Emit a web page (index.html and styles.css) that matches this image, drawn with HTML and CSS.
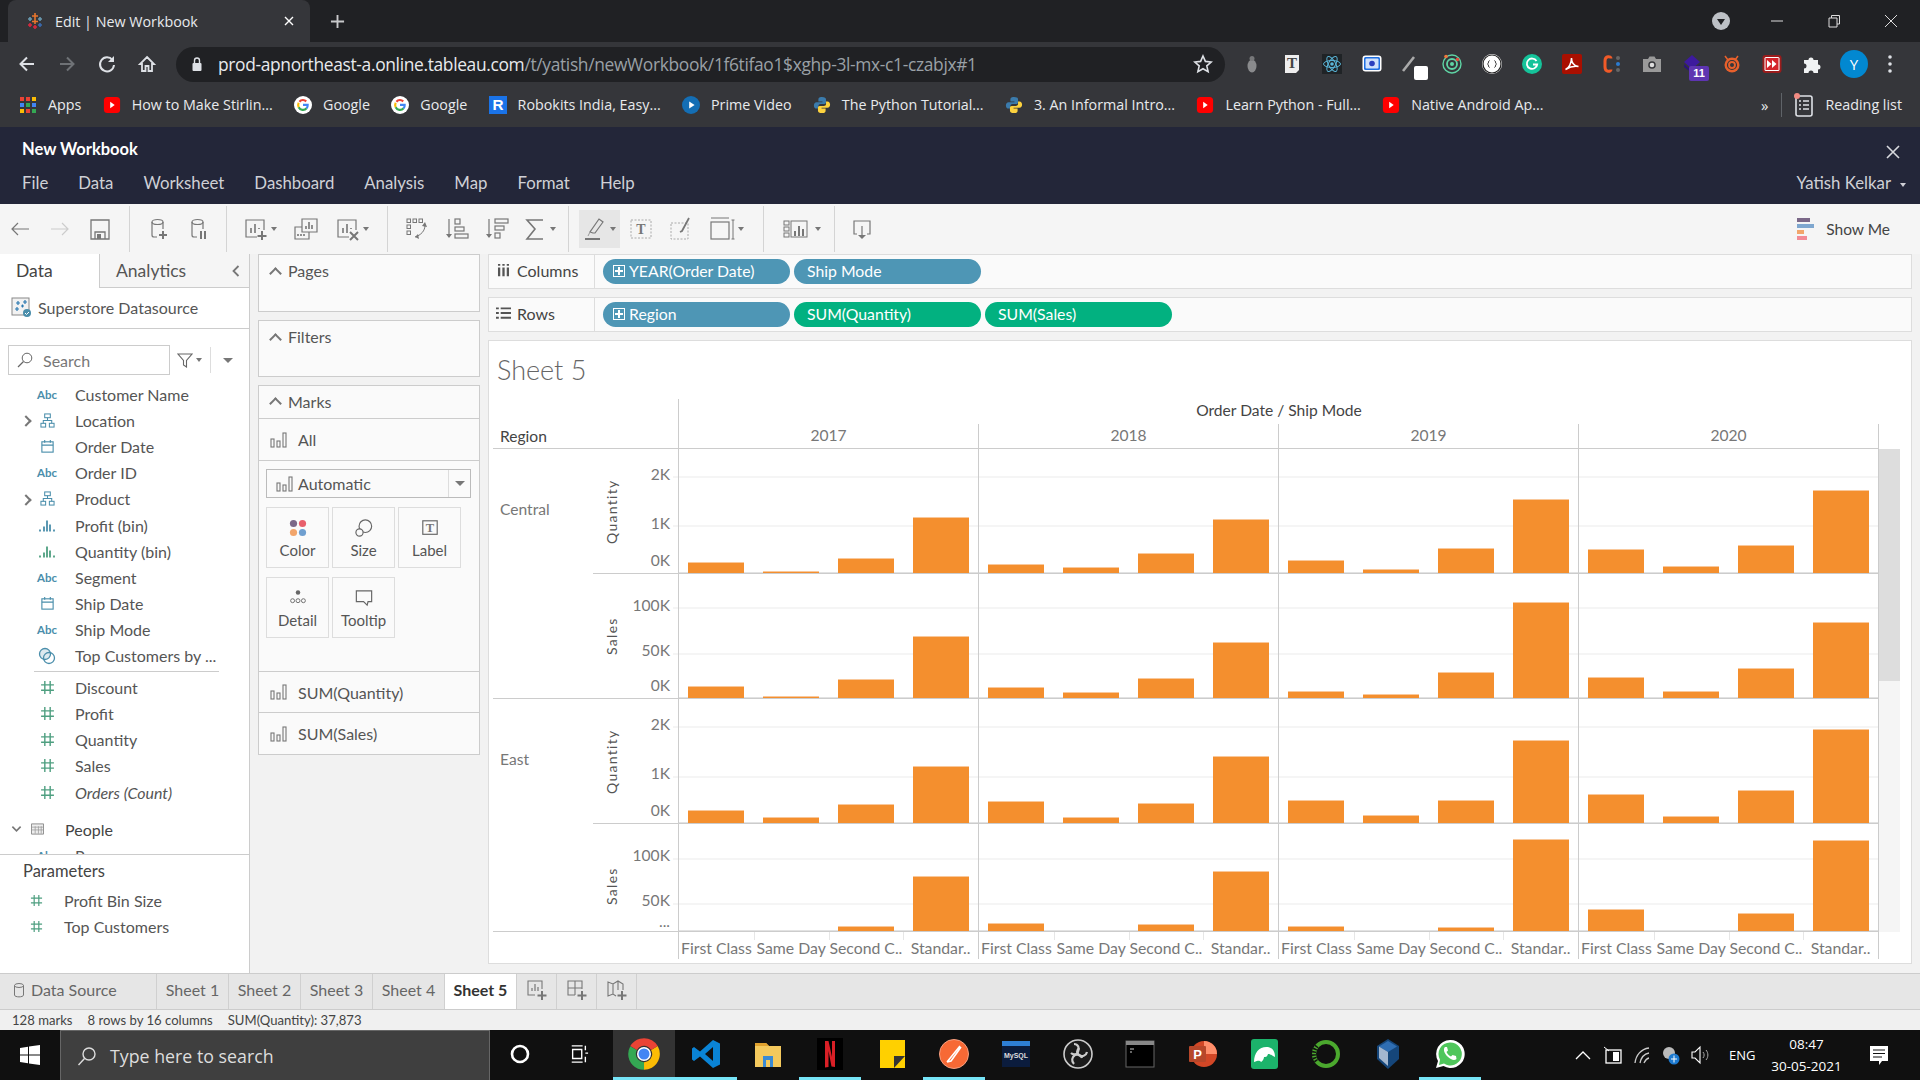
FILE: index.html
```html
<!DOCTYPE html>
<html lang="en">
<head>
    <meta charset="UTF-8">
    <title>Edit | New Workbook</title>
    <link rel="stylesheet" href="styles.css">
</head>
<body>

<svg class="defs" width="0" height="0">
    <symbol id="i-yt" viewBox="0 0 20 20"><rect x="1" y="1" width="18" height="18" rx="4" fill="#f00"/><path d="M8 6.500l5 3.500-5 3.500z" fill="#fff"/></symbol>
    <symbol id="i-g" viewBox="0 0 20 20"><circle cx="10" cy="10" r="10" fill="#fff"/><path d="M6 6.400A5.400 5.400 0 0 1 13.600 6" fill="none" stroke="#ea4335" stroke-width="2.400"/><path d="M5.200 12.400a5.400 5.400 0 0 1 0-4.800" fill="none" stroke="#fbbc05" stroke-width="2.400"/><path d="M14 13.700a5.400 5.400 0 0 1-8.800-1.300" fill="none" stroke="#34a853" stroke-width="2.400"/><path d="M10 9.900h5.200a5.400 5.400 0 0 1-1.200 3.800" fill="none" stroke="#4285f4" stroke-width="2.400"/></symbol>
    <symbol id="i-py" viewBox="0 0 20 20"><path d="M10 1C6.500 1 6 2.500 6 4v2h4.500v1H4C2 7 1 8.500 1 10.500S2 14 4 14h2v-2.500C6 10 7 9 8.500 9h4C14 9 14.500 8 14.500 6.500V4C14.500 2 13 1 10 1z" fill="#3b7bac"/><path d="M10 19c3.500 0 4-1.500 4-3v-2H9.500v-1H16c2 0 3-1.500 3-3.500S18 6 16 6h-1.500v2.500c0 1.500-1 2.500-2.500 2.500H7.500C6 11 5.500 12 5.500 13.500V16c0 2 1.500 3 4.500 3z" fill="#fdd23e"/></symbol>
    <symbol id="i-bars" viewBox="0 0 18 16"><g fill="none" stroke="#777" stroke-width="1.100"><rect x="1" y="7" width="3" height="8"/><rect x="7" y="9" width="3" height="6"/><rect x="13" y="1" width="3" height="14"/></g></symbol>
    <symbol id="i-hash" viewBox="0 0 14 14"><path d="M4.500 1v12M9.500 1v12M1 4.500h12M1 9.500h12" stroke="#4e9f80" stroke-width="1.300" fill="none"/></symbol>
    <symbol id="i-tree" viewBox="0 0 16 16"><g fill="none" stroke="#4a8eab" stroke-width="1.100"><rect x="5" y="1" width="6" height="4"/><rect x="1" y="11" width="5" height="4"/><rect x="10" y="11" width="5" height="4"/><path d="M8 5v3M3.500 11V8h9v3"/></g></symbol>
    <symbol id="i-cal" viewBox="0 0 16 16"><g fill="none" stroke="#4a8eab" stroke-width="1.200"><rect x="2" y="3" width="12" height="11"/><path d="M2 6.500h12M5 1v3M11 1v3"/></g></symbol>
    <symbol id="i-bin" viewBox="0 0 18 14"><path d="M2 11v2M6 8v5M9 2v11M12 6v7M16 11v2" stroke-width="1.800" fill="none" stroke="currentColor"/></symbol>
    <symbol id="i-cyl" viewBox="0 0 24 24"><path d="M6 5v13a2 2 0 0 0 2 2h3M17 5v7" fill="none" stroke="#777" stroke-width="1.200"/><ellipse cx="11.500" cy="5" rx="5.500" ry="2.500" fill="none" stroke="#777" stroke-width="1.200"/></symbol>
</svg>

<!-- browser chrome -->
<header class="browser">
    <div class="tabstrip">
        <div class="tab">
            <svg class="favicon" viewBox="0 0 18 18"><path d="M9 1v6M6 4h6" stroke="#e8762d" stroke-width="1.600"/><path d="M9 7v5M6 9.500h6" stroke="#e8762d" stroke-width="1.600"/><path d="M4 5v4M2 7h4" stroke="#6a9bb1" stroke-width="1.600"/><path d="M14 5v4M12 7h4" stroke="#6a9bb1" stroke-width="1.600"/><path d="M4 11v4M2 13h4" stroke="#d9283f" stroke-width="1.600"/><path d="M14 11v4M12 13h4" stroke="#3a6bb0" stroke-width="1.600"/><path d="M9 13v4M7 15h4" stroke="#d9283f" stroke-width="1.600"/></svg>
            <span class="tab-title">Edit | New Workbook</span>
            <svg class="tab-x" viewBox="0 0 10 10"><path d="M1 1l8 8M9 1l-8 8" stroke="#fff" stroke-width="1.400"/></svg>
        </div>
        <svg class="tab-new" viewBox="0 0 16 16"><path d="M8 1v14M1 8h14" stroke="#c8c9cb" stroke-width="2"/></svg>
        <div class="win-controls">
            <svg class="win-profile" viewBox="0 0 18 18"><circle cx="9" cy="9" r="9" fill="#bdc1c6"/><path d="M5 7h8l-4 6z" fill="#202124"/></svg>
            <svg class="win-btn" viewBox="0 0 14 14"><path d="M1 7h12" stroke="#ddd" stroke-width="1"/></svg>
            <svg class="win-btn" viewBox="0 0 14 14"><path d="M2 4h8v9H2zM4.500 4V1.500H12.500V10H10" fill="none" stroke="#ddd" stroke-width="1"/></svg>
            <svg class="win-btn" viewBox="0 0 14 14"><path d="M1 1l12 12M13 1L1 13" stroke="#ddd" stroke-width="1"/></svg>
        </div>
    </div>
    <div class="navbar">
        <svg class="nav-ico" viewBox="0 0 20 20"><path d="M17 10H4M10 3.500L3.500 10l6.500 6.500" fill="none" stroke="#dee1e6" stroke-width="2"/></svg>
        <svg class="nav-ico" viewBox="0 0 20 20"><path d="M3 10h13M10 3.500l6.500 6.500-6.500 6.500" fill="none" stroke="#6f7276" stroke-width="2"/></svg>
        <svg class="nav-ico" viewBox="0 0 20 20"><path d="M15.500 6A7 7 0 1 0 17 11" fill="none" stroke="#dee1e6" stroke-width="2"/><path d="M17 2v6h-6z" fill="#dee1e6"/></svg>
        <svg class="nav-ico" viewBox="0 0 20 20"><path d="M10 3l7 7h-2v7h-3.500v-5h-3v5H5v-7H3z" fill="none" stroke="#dee1e6" stroke-width="1.800"/></svg>
        <div class="omnibox">
            <svg class="lock" viewBox="0 0 12 16"><path d="M3.500 7V4.500a2.500 2.500 0 0 1 5 0V7" fill="none" stroke="#dee1e6" stroke-width="1.400"/><rect x="1.500" y="7" width="9" height="8" rx="1" fill="#dee1e6"/></svg>
            <span class="url"><b>prod-apnortheast-a.online.tableau.com</b>/t/yatish/newWorkbook/1f6tifao1$xghp-3l-mx-c1-czabjx#1</span>
            <svg class="star" viewBox="0 0 20 20"><path d="M10 2l2.400 5.400 5.800.6-4.400 3.900 1.300 5.800L10 14.700l-5.100 3 1.300-5.800L1.800 8l5.800-.6z" fill="none" stroke="#dee1e6" stroke-width="1.600"/></svg>
        </div>
        <div class="extensions">
            <svg viewBox="0 0 20 20"><ellipse cx="10" cy="12" rx="4.500" ry="6.500" fill="#8a8b8d"/><circle cx="10" cy="4.500" r="2.500" fill="#77787a"/></svg>
            <svg viewBox="0 0 20 20"><path d="M3 1h14v15l-3 3H3z" fill="#eee"/><text x="10" y="14" class="ext-t">T</text></svg>
            <svg viewBox="0 0 20 20"><rect width="20" height="20" fill="#1f2326"/><g fill="none" stroke="#5ab5d8" stroke-width="1"><ellipse cx="10" cy="10" rx="8.500" ry="3.500"/><ellipse cx="10" cy="10" rx="8.500" ry="3.500" transform="rotate(60 10 10)"/><ellipse cx="10" cy="10" rx="8.500" ry="3.500" transform="rotate(120 10 10)"/></g><circle cx="10" cy="10" r="1.800" fill="#5ab5d8"/></svg>
            <svg viewBox="0 0 20 20"><rect x=".500" y="1.500" width="19" height="16" rx="3" fill="#fff"/><rect x="2" y="3" width="16" height="13" rx="1.500" fill="#1e6ee0"/><rect x="3.500" y="4.500" width="13" height="10" rx="1" fill="#cfe0fb"/><circle cx="10" cy="9.500" r="2.800" fill="#2a3fbe"/></svg>
            <svg class="ext-over" viewBox="0 0 26 26"><path d="M1 17L12 3" stroke="#aaa" stroke-width="2.600"/><rect x="12" y="12" width="14" height="14" rx="2" fill="#fff"/></svg>
            <svg viewBox="0 0 20 20"><circle cx="10" cy="10" r="9" fill="none" stroke="#5fd5a5" stroke-width="1.400"/><circle cx="10" cy="10" r="5" fill="none" stroke="#5fd5a5" stroke-width="1.800"/><circle cx="10" cy="10" r="2" fill="#5fd5a5"/><circle cx="4" cy="2.500" r="1.800" fill="#f0783c"/><circle cx="15.500" cy="5.500" r="1.800" fill="#e0483c"/></svg>
            <svg viewBox="0 0 20 20"><circle cx="10" cy="10" r="10" fill="#fff"/><circle cx="10" cy="10" r="9" fill="none" stroke="#222" stroke-width="1.200"/><path d="M7.500 6.500C6 7 7 9.500 5.500 10c1.500.5.500 3 2 3.500M12.500 6.500c1.500.5.500 3 2 3.500-1.500.5-.500 3-2 3.500" fill="none" stroke="#222"/></svg>
            <svg viewBox="0 0 20 20"><circle cx="10" cy="10" r="10" fill="#15c39a"/><path d="M14.500 7a5.200 5.200 0 1 0 .7 3.500H11" fill="none" stroke="#fff" stroke-width="1.800"/></svg>
            <svg viewBox="0 0 20 20"><rect width="20" height="20" rx="2" fill="#a90f00"/><path d="M3.500 15.500C7 14 9.500 9 9.500 4c0 5 3 8 7 8.500-3.500-.5-9 .500-13 3z" fill="none" stroke="#fff" stroke-width="1.500"/></svg>
            <svg viewBox="0 0 20 20"><path d="M9 4.500C9 2 3 1.500 3 7v6c0 5.500 6 5 6 2.500" fill="none" stroke="#f05a28" stroke-width="3"/><circle cx="16" cy="4" r="2" fill="#666"/><circle cx="16" cy="10" r="2" fill="#2a7bd0"/><circle cx="16" cy="16" r="2" fill="#666"/></svg>
            <svg viewBox="0 0 20 20"><path d="M1 5h5l1.500-2.500h5L14 5h5v13H1z" fill="#9a9a9a"/><circle cx="10" cy="11" r="3.800" fill="#35363a"/><circle cx="10" cy="11" r="2.300" fill="#ddd"/></svg>
            <div class="ext-stack">
                <svg viewBox="0 0 20 20"><path d="M10 1l8 7-8 7-8-7z" fill="#3d1a9e"/><path d="M2 10l8 7 8-7v3l-8 6-8-6z" fill="#2b1477"/></svg>
                <span class="ext-badge">11</span>
            </div>
            <svg viewBox="0 0 20 20"><circle cx="10" cy="11" r="7.500" fill="#e8602c"/><circle cx="10" cy="11" r="4.500" fill="none" stroke="#35363a" stroke-width="1.200"/><circle cx="10" cy="11" r="2" fill="#35363a"/><path d="M3 2l3 4M16 2l-3 4" stroke="#e8602c" stroke-width="1.500"/></svg>
            <svg viewBox="0 0 20 20"><rect x=".500" y="1" width="19" height="18" rx="3" fill="#9b1c1c"/><rect x="2.500" y="3" width="15" height="14" rx="1.500" fill="#fff"/><rect x="3.500" y="4" width="13" height="12" fill="#d4232a"/><path d="M5 6l4.500 4L5 14zM10 6l4.500 4-4.500 4z" fill="#fff"/></svg>
            <svg viewBox="0 0 20 20"><path d="M2 6h4.500a2.500 2.500 0 1 1 5 0H16v4.500a2.500 2.500 0 1 1 0 5V19H11.500a2.500 2.500 0 1 0-5 0H2v-4.500a2.500 2.500 0 1 0 0-5z" fill="#f1f3f4"/></svg>
            <span class="avatar">Y</span>
            <svg class="ext-dots" viewBox="0 0 6 20"><circle cx="3" cy="3" r="1.800" fill="#dee1e6"/><circle cx="3" cy="10" r="1.800" fill="#dee1e6"/><circle cx="3" cy="17" r="1.800" fill="#dee1e6"/></svg>
        </div>
    </div>
    <div class="bookmarks">
        <span class="bm bm-apps">
            <svg class="bm-ico" viewBox="0 0 18 18"><g><rect x="1" y="1" width="4" height="4" fill="#e94335"/><rect x="7" y="1" width="4" height="4" fill="#e94335"/><rect x="13" y="1" width="4" height="4" fill="#fbbc05"/><rect x="1" y="7" width="4" height="4" fill="#4285f4"/><rect x="7" y="7" width="4" height="4" fill="#34a853"/><rect x="13" y="7" width="4" height="4" fill="#4285f4"/><rect x="1" y="13" width="4" height="4" fill="#fbbc05"/><rect x="7" y="13" width="4" height="4" fill="#e94335"/><rect x="13" y="13" width="4" height="4" fill="#34a853"/></g></svg>Apps</span>
        <span class="bm"><svg class="bm-ico"><use href="#i-yt"/></svg>How to Make Stirlin...</span>
        <span class="bm"><svg class="bm-ico"><use href="#i-g"/></svg>Google</span>
        <span class="bm"><svg class="bm-ico"><use href="#i-g"/></svg>Google</span>
        <span class="bm"><svg class="bm-ico" viewBox="0 0 20 20"><rect width="20" height="20" fill="#1a73e8"/><text x="10" y="16" class="bm-r">R</text></svg>Robokits India, Easy...</span>
        <span class="bm"><svg class="bm-ico" viewBox="0 0 20 20"><circle cx="10" cy="10" r="10" fill="#146eb4"/><path d="M8 6l6 4-6 4z" fill="#fff"/></svg>Prime Video</span>
        <span class="bm"><svg class="bm-ico"><use href="#i-py"/></svg>The Python Tutorial...</span>
        <span class="bm"><svg class="bm-ico"><use href="#i-py"/></svg>3. An Informal Intro...</span>
        <span class="bm"><svg class="bm-ico"><use href="#i-yt"/></svg>Learn Python - Full...</span>
        <span class="bm"><svg class="bm-ico"><use href="#i-yt"/></svg>Native Android Ap...</span>
        <span class="bm-more">»</span>
        <span class="bm bm-reading"><svg class="bm-ico" viewBox="0 0 20 24"><rect x="2" y="3" width="16" height="20" rx="2" fill="none" stroke="#dee1e6" stroke-width="1.600"/><path d="M9 8h6M9 12h6M9 16h6M5 8h2M5 12h2M5 16h2" stroke="#dee1e6" stroke-width="1.600"/><circle cx="3" cy="3" r="3" fill="#f28b82"/></svg>Reading list</span>
    </div>
</header>

<!-- tableau title + menu -->
<div class="app-head">
    <div class="app-title-row">
        <span class="app-title">New Workbook</span>
        <svg class="app-x" viewBox="0 0 14 14"><path d="M1 1l12 12M13 1L1 13" stroke="#d8d9de" stroke-width="1.600"/></svg>
    </div>
    <div class="menu-row">
        <nav class="menu">
            <span>File</span><span>Data</span><span>Worksheet</span><span>Dashboard</span><span>Analysis</span><span>Map</span><span>Format</span><span>Help</span>
        </nav>
        <span class="user">Yatish Kelkar<i class="caret caret-light"></i></span>
    </div>
</div>

<!-- toolbar -->
<div class="toolbar">
    <div class="tb-group tb-g1">
        <svg class="tb-btn" viewBox="0 0 24 24"><path d="M21 12H4M10 6l-6 6 6 6" fill="none" stroke="#777" stroke-width="1.200"/></svg>
        <svg class="tb-btn" viewBox="0 0 24 24"><path d="M3 12h17M14 6l6 6-6 6" fill="none" stroke="#ccc" stroke-width="1.200"/></svg>
        <svg class="tb-btn" viewBox="0 0 24 24"><path d="M3 3h18v19H3z" fill="none" stroke="#777" stroke-width="1.300"/><path d="M7 22v-7h10v7" fill="none" stroke="#777" stroke-width="1.300"/><rect x="9" y="17" width="4" height="5" fill="#777"/></svg>
    </div>
    <div class="tb-group tb-g2">
        <span class="tb-btn"><svg viewBox="0 0 24 24"><use href="#i-cyl"/><path d="M17 14v8M13 18h8" stroke="#777" stroke-width="2"/></svg></span>
        <span class="tb-btn"><svg viewBox="0 0 24 24"><use href="#i-cyl"/><path d="M15 14v8M19 14v8" stroke="#777" stroke-width="2"/></svg></span>
    </div>
    <div class="tb-group tb-g3">
        <span class="tb-btn tb-wide"><svg viewBox="0 0 24 24"><path d="M13 20H2V3h18v10" fill="none" stroke="#777" stroke-width="1.200"/><path d="M7 16v-5M11 16V7M15 12v-1" stroke="#777" stroke-width="1.600"/><path d="M18 14v9M13.500 19h9" stroke="#777" stroke-width="2"/></svg><i class="caret"></i></span>
        <span class="tb-btn tb-wide"><svg viewBox="0 0 24 24"><path d="M8 2h15v13H8z" fill="none" stroke="#777" stroke-width="1.200"/><path d="M12 12V9M15 12V5M18 12V8" stroke="#777" stroke-width="1.600"/><path d="M8 10H1v12h14v-7" fill="none" stroke="#777" stroke-width="1.200"/><path d="M4 19v-2M7 19v-2M10 19v-2" stroke="#777" stroke-width="1.600"/></svg></span>
        <span class="tb-btn tb-wide"><svg viewBox="0 0 24 24"><path d="M13 20H2V3h18v10" fill="none" stroke="#777" stroke-width="1.200"/><path d="M7 16v-5M11 16V7M15 12v-1" stroke="#777" stroke-width="1.600"/><path d="M14 15l8 8M22 15l-8 8" stroke="#777" stroke-width="2"/></svg><i class="caret"></i></span>
    </div>
    <div class="tb-group tb-g4">
        <svg class="tb-btn" viewBox="0 0 24 24"><g fill="none" stroke="#777"><rect x="2" y="2" width="3.500" height="3.500"/><rect x="8" y="2" width="3.500" height="3.500"/><rect x="14" y="2" width="3.500" height="3.500"/><rect x="2" y="8" width="3.500" height="3.500"/><rect x="2" y="14" width="3.500" height="3.500"/><path d="M20 8c0 6-4 10-10 12"/></g><path d="M17 9l3-4 2 5zM13 17l-3 3 4 2z" fill="#777"/></svg>
        <svg class="tb-btn" viewBox="0 0 24 24"><path d="M4 2v18" stroke="#777" stroke-width="1.200"/><path d="M1 17l3 4 3-4z" fill="#777"/><g fill="none" stroke="#777" stroke-width="1.200"><rect x="10" y="2" width="5" height="5"/><rect x="10" y="10" width="9" height="4"/><rect x="10" y="17" width="13" height="4"/></g></svg>
        <svg class="tb-btn" viewBox="0 0 24 24"><path d="M4 2v18" stroke="#777" stroke-width="1.200"/><path d="M1 17l3 4 3-4z" fill="#777"/><g fill="none" stroke="#777" stroke-width="1.200"><rect x="10" y="2" width="13" height="4"/><rect x="10" y="9" width="9" height="4"/><rect x="10" y="16" width="5" height="5"/></g></svg>
        <span class="tb-btn tb-sum"><svg viewBox="0 0 24 24"><path d="M20 3H4l8 9-8 10h16" fill="none" stroke="#777" stroke-width="1.600"/></svg><i class="caret"></i></span>
    </div>
    <div class="tb-group tb-g5">
        <span class="tb-btn tb-active"><svg viewBox="0 0 24 24"><path d="M10 16l-3-1 9-13 4 3-8 11z" fill="none" stroke="#777" stroke-width="1.200"/><path d="M7 15l-2 4" stroke="#999"/><path d="M2 22h15" stroke="#777" stroke-width="2"/></svg><i class="caret"></i></span>
        <svg class="tb-btn" viewBox="0 0 24 24"><rect x="2" y="3" width="20" height="18" fill="none" stroke="#aaa" stroke-dasharray="2 1.500"/><text x="12" y="17" class="tb-t">T</text></svg>
        <svg class="tb-btn" viewBox="0 0 24 24"><rect x="2" y="6" width="17" height="16" fill="none" stroke="#aaa" stroke-dasharray="2 1.500"/><path d="M20 1L13 14l-2 1" fill="none" stroke="#777" stroke-width="1.800"/></svg>
        <span class="tb-btn tb-fit"><svg viewBox="0 0 26 24"><path d="M2 1h18" stroke="#777"/><rect x="2" y="5" width="18" height="17" fill="none" stroke="#777" stroke-width="1.200"/><path d="M24 3v19M22.500 3h3M22.500 22h3" stroke="#777"/></svg><i class="caret"></i></span>
    </div>
    <div class="tb-group tb-g6">
        <span class="tb-btn tb-show"><svg viewBox="0 0 26 24"><g fill="none" stroke="#777"><rect x="2" y="4" width="5" height="4"/><rect x="2" y="10" width="5" height="4"/><rect x="2" y="16" width="5" height="4"/><rect x="9" y="4" width="16" height="16"/></g><path d="M13 19v-5M17 19v-10M21 19v-7" stroke="#777" stroke-width="2"/></svg><i class="caret"></i></span>
    </div>
    <div class="tb-group tb-g7">
        <svg class="tb-btn" viewBox="0 0 24 24"><path d="M7 17H4V4h16v13h-3" fill="none" stroke="#777" stroke-width="1.200"/><path d="M12 9v10" stroke="#777" stroke-width="1.200"/><path d="M8 18h8l-4 4z" fill="#777"/></svg>
    </div>
    <div class="show-me">
        <svg class="show-me-ico" viewBox="0 0 18 24"><rect x="1" y="1" width="13" height="4" fill="#7b6888"/><rect x="1" y="7" width="17" height="4" fill="#7fa7cf"/><rect x="1" y="13" width="7" height="4" fill="#f2a56b"/><rect x="1" y="19" width="10" height="4" fill="#f28b96"/></svg>
        Show Me
    </div>
</div>

<main class="workspace">
    <!-- data pane -->
    <aside class="data-pane">
        <div class="pane-tabs">
            <span class="pane-tab pane-tab-on">Data</span>
            <span class="pane-tab">Analytics<svg class="pane-collapse" viewBox="0 0 8 12"><path d="M6.500 1L1.500 6l5 5" fill="none" stroke="#777" stroke-width="1.800"/></svg></span>
        </div>
        <div class="ds-row">
            <svg class="ds-ico" viewBox="0 0 20 20"><rect x="1" y="1" width="17" height="17" fill="#f2f2f2" stroke="#888"/><path d="M5 6h4M7 4v4M12 5h4M14 3v4M4 12h4M6 10v4M10 9h3M11.500 7.500v3" stroke="#2b78b0" stroke-width="1.200"/><circle cx="16" cy="16" r="4" fill="#4a8eab"/><path d="M14 16l1.500 1.500L18 15" fill="none" stroke="#fff"/></svg>
            <span>Superstore Datasource</span>
        </div>
        <div class="search-row">
            <label class="search-box">
                <svg class="search-ico" viewBox="0 0 16 16"><circle cx="10" cy="6" r="4.800" fill="none" stroke="#666"/><path d="M6.500 9.500L1 15" stroke="#666" stroke-width="1.200"/></svg>
                <span>Search</span>
            </label>
            <svg class="search-filter" viewBox="0 0 16 16"><path d="M1 2h14L9.500 8.500V15l-3-2V8.500z" fill="none" stroke="#666" stroke-width="1.100"/></svg>
            <i class="caret caret-sm"></i>
            <span class="search-sep"></span>
            <i class="caret caret-lg"></i>
        </div>
        <div class="field-list">
            <div class="field"><b></b><span class="f-ico f-abc">Abc</span><span>Customer Name</span></div>
            <div class="field"><b class="f-more"></b><span class="f-ico"><svg><use href="#i-tree"/></svg></span><span>Location</span></div>
            <div class="field"><b></b><span class="f-ico"><svg><use href="#i-cal"/></svg></span><span>Order Date</span></div>
            <div class="field"><b></b><span class="f-ico f-abc">Abc</span><span>Order ID</span></div>
            <div class="field"><b class="f-more"></b><span class="f-ico"><svg><use href="#i-tree"/></svg></span><span>Product</span></div>
            <div class="field"><b></b><span class="f-ico f-bin-blue"><svg><use href="#i-bin"/></svg></span><span>Profit (bin)</span></div>
            <div class="field"><b></b><span class="f-ico f-bin-green"><svg><use href="#i-bin"/></svg></span><span>Quantity (bin)</span></div>
            <div class="field"><b></b><span class="f-ico f-abc">Abc</span><span>Segment</span></div>
            <div class="field"><b></b><span class="f-ico"><svg><use href="#i-cal"/></svg></span><span>Ship Date</span></div>
            <div class="field"><b></b><span class="f-ico f-abc">Abc</span><span>Ship Mode</span></div>
            <div class="field"><b></b><span class="f-ico f-set"><svg viewBox="0 0 18 18"><circle cx="7" cy="7" r="5.500" fill="#dce9ef" stroke="#4a8eab" stroke-width="1.300"/><circle cx="11" cy="11" r="5.500" fill="none" stroke="#4a8eab" stroke-width="1.300"/></svg></span><span>Top Customers by ...</span></div>
            <div class="field-sep"></div>
            <div class="field"><b></b><span class="f-ico"><svg><use href="#i-hash"/></svg></span><span>Discount</span></div>
            <div class="field"><b></b><span class="f-ico"><svg><use href="#i-hash"/></svg></span><span>Profit</span></div>
            <div class="field"><b></b><span class="f-ico"><svg><use href="#i-hash"/></svg></span><span>Quantity</span></div>
            <div class="field"><b></b><span class="f-ico"><svg><use href="#i-hash"/></svg></span><span>Sales</span></div>
            <div class="field field-calc"><b></b><span class="f-ico"><svg><use href="#i-hash"/></svg></span><em>Orders (Count)</em></div>
            <div class="table-row">
                <svg class="table-chev" viewBox="0 0 12 8"><path d="M1.500 1.500L6 6l4.500-4.500" fill="none" stroke="#777" stroke-width="1.800"/></svg>
                <svg class="table-ico" viewBox="0 0 14 12"><path d="M.500.500h13v11H.500z" fill="#eee" stroke="#888"/><path d="M1 4h12M1 7h12M4.500 3v8M8 3v8M11 3v8" stroke="#999" stroke-width=".800"/></svg>
                <span>People</span>
            </div>
            <div class="field field-sub"><span class="f-ico f-abc">Abc</span><span>Person</span></div>
        </div>
        <div class="params">
            <div class="params-title">Parameters</div>
            <div class="param"><svg><use href="#i-hash"/></svg><span>Profit Bin Size</span></div>
            <div class="param"><svg><use href="#i-hash"/></svg><span>Top Customers</span></div>
        </div>
    </aside>

    <!-- pages / filters / marks -->
    <section class="cards-col">
        <div class="card card-pages"><div class="card-head"><i class="chev-up"></i>Pages</div></div>
        <div class="card card-filters"><div class="card-head"><i class="chev-up"></i>Filters</div></div>
        <div class="card card-marks">
            <div class="card-head marks-head"><i class="chev-up"></i>Marks</div>
            <div class="marks-row marks-all"><svg><use href="#i-bars"/></svg>All</div>
            <div class="marks-body">
                <div class="mark-select">
                    <svg><use href="#i-bars"/></svg><span>Automatic</span>
                    <span class="mark-select-btn"><i class="caret caret-lg"></i></span>
                </div>
                <div class="mark-grid">
                    <div class="mark-btn"><svg viewBox="0 0 20 20"><circle cx="5" cy="5" r="4" fill="#7b6888"/><circle cx="15" cy="5" r="4" fill="#e8606c"/><circle cx="5" cy="15" r="4" fill="#f2a56b"/><circle cx="15" cy="15" r="4" fill="#6f9fd0"/></svg>Color</div>
                    <div class="mark-btn"><svg viewBox="0 0 20 20"><circle cx="11.500" cy="8" r="7" fill="none" stroke="#666" stroke-width="1.300"/><circle cx="5" cy="15" r="4" fill="#fafafa" stroke="#666" stroke-width="1.300"/></svg>Size</div>
                    <div class="mark-btn"><svg viewBox="0 0 20 20"><rect x="2" y="2" width="16" height="15" fill="none" stroke="#666" stroke-width="1.300"/><text x="10" y="14" class="tb-t">T</text></svg>Label</div>
                    <div class="mark-btn"><svg viewBox="0 0 20 20"><circle cx="10" cy="4" r="2.500" fill="#666"/><g fill="none" stroke="#666"><circle cx="4" cy="13" r="2.200"/><circle cx="10" cy="13" r="2.200"/><circle cx="16" cy="13" r="2.200"/></g></svg>Detail</div>
                    <div class="mark-btn"><svg viewBox="0 0 20 20"><path d="M1.500 2h17v12h-4l-1 4-4-4h-8z" fill="none" stroke="#666" stroke-width="1.300"/></svg>Tooltip</div>
                </div>
            </div>
            <div class="marks-row marks-sum"><svg><use href="#i-bars"/></svg>SUM(Quantity)</div>
            <div class="marks-row marks-sum"><svg><use href="#i-bars"/></svg>SUM(Sales)</div>
        </div>
    </section>

    <!-- shelves + view -->
    <section class="view-col">
        <div class="shelf">
            <div class="shelf-label"><svg viewBox="0 0 14 16"><path d="M2 5v10M7 5v10M12 5v10" stroke="#555" stroke-width="2.600"/><path d="M2 1v2M7 1v2M12 1v2" stroke="#555" stroke-width="2.600"/></svg>Columns</div>
            <div class="pills">
                <span class="pill pill-blue"><i class="pill-plus"></i>YEAR(Order Date)</span>
                <span class="pill pill-blue pill-plain">Ship Mode</span>
            </div>
        </div>
        <div class="shelf">
            <div class="shelf-label"><svg viewBox="0 0 16 14"><path d="M5 2h11M5 7h11M5 12h11M0 2h3M0 7h3M0 12h3" stroke="#555" stroke-width="2"/></svg>Rows</div>
            <div class="pills">
                <span class="pill pill-blue"><i class="pill-plus"></i>Region</span>
                <span class="pill pill-green pill-plain">SUM(Quantity)</span>
                <span class="pill pill-green pill-plain">SUM(Sales)</span>
            </div>
        </div>

        <div class="sheet">
            <h1 class="sheet-title">Sheet 5</h1>
            <div class="viz">
                <div class="viz-head">
                    <div class="vh-top"><span>Order Date / Ship Mode</span></div>
                    <div class="vh-years">
                        <div class="vh-region">Region</div>
                        <div class="vh-year">2017</div><div class="vh-year">2018</div><div class="vh-year">2019</div><div class="vh-year vh-last">2020</div>
                    </div>
                </div>
                <div class="viz-body">
                    <div class="viz-rows">
                        <div class="region">
                            <div class="region-name">Central</div>
                            <div class="measures">
                                <div class="measure">
                                    <div class="axis"><span class="axis-title">Quantity</span><span class="tick" style="top:15px">2K</span><span class="tick" style="top:64px">1K</span><span class="tick" style="top:101px">0K</span></div>
                                    <i class="gl" style="top:27px"></i><i class="gl" style="top:76px"></i>
                                    <div class="pane"><i class="bar" style="height:11px"></i><i class="bar" style="height:2px"></i><i class="bar" style="height:15px"></i><i class="bar" style="height:56px"></i></div>
                                    <div class="pane"><i class="bar" style="height:9px"></i><i class="bar" style="height:6px"></i><i class="bar" style="height:20px"></i><i class="bar" style="height:54px"></i></div>
                                    <div class="pane"><i class="bar" style="height:13px"></i><i class="bar" style="height:4px"></i><i class="bar" style="height:25px"></i><i class="bar" style="height:74px"></i></div>
                                    <div class="pane"><i class="bar" style="height:24px"></i><i class="bar" style="height:7px"></i><i class="bar" style="height:28px"></i><i class="bar" style="height:83px"></i></div>
                                </div>
                                <div class="measure measure-last">
                                    <div class="axis"><span class="axis-title">Sales</span><span class="tick" style="top:21px">100K</span><span class="tick" style="top:66px">50K</span><span class="tick" style="top:101px">0K</span></div>
                                    <i class="gl" style="top:33px"></i><i class="gl" style="top:79px"></i>
                                    <div class="pane"><i class="bar" style="height:12px"></i><i class="bar" style="height:2px"></i><i class="bar" style="height:19px"></i><i class="bar" style="height:62px"></i></div>
                                    <div class="pane"><i class="bar" style="height:11px"></i><i class="bar" style="height:6px"></i><i class="bar" style="height:20px"></i><i class="bar" style="height:56px"></i></div>
                                    <div class="pane"><i class="bar" style="height:7px"></i><i class="bar" style="height:4px"></i><i class="bar" style="height:26px"></i><i class="bar" style="height:96px"></i></div>
                                    <div class="pane"><i class="bar" style="height:21px"></i><i class="bar" style="height:7px"></i><i class="bar" style="height:30px"></i><i class="bar" style="height:76px"></i></div>
                                </div>
                            </div>
                        </div>
                        <div class="region">
                            <div class="region-name">East</div>
                            <div class="measures">
                                <div class="measure">
                                    <div class="axis"><span class="axis-title">Quantity</span><span class="tick" style="top:15px">2K</span><span class="tick" style="top:64px">1K</span><span class="tick" style="top:101px">0K</span></div>
                                    <i class="gl" style="top:27px"></i><i class="gl" style="top:77px"></i>
                                    <div class="pane"><i class="bar" style="height:13px"></i><i class="bar" style="height:6px"></i><i class="bar" style="height:19px"></i><i class="bar" style="height:57px"></i></div>
                                    <div class="pane"><i class="bar" style="height:22px"></i><i class="bar" style="height:6px"></i><i class="bar" style="height:20px"></i><i class="bar" style="height:67px"></i></div>
                                    <div class="pane"><i class="bar" style="height:23px"></i><i class="bar" style="height:8px"></i><i class="bar" style="height:23px"></i><i class="bar" style="height:83px"></i></div>
                                    <div class="pane"><i class="bar" style="height:29px"></i><i class="bar" style="height:7px"></i><i class="bar" style="height:33px"></i><i class="bar" style="height:94px"></i></div>
                                </div>
                                <div class="measure measure-last measure-cut">
                                    <div class="axis"><span class="axis-title">Sales</span><span class="tick" style="top:21px">100K</span><span class="tick" style="top:66px">50K</span><span class="tick" style="top:87px">...</span></div>
                                    <i class="gl" style="top:34px"></i><i class="gl" style="top:79px"></i>
                                    <div class="pane"><i class="bar bar-none"></i><i class="bar bar-none"></i><i class="bar" style="height:5px"></i><i class="bar" style="height:55px"></i></div>
                                    <div class="pane"><i class="bar" style="height:8px"></i><i class="bar bar-none"></i><i class="bar" style="height:7px"></i><i class="bar" style="height:60px"></i></div>
                                    <div class="pane"><i class="bar" style="height:5px"></i><i class="bar bar-none"></i><i class="bar" style="height:4px"></i><i class="bar" style="height:92px"></i></div>
                                    <div class="pane"><i class="bar" style="height:22px"></i><i class="bar bar-none"></i><i class="bar" style="height:18px"></i><i class="bar" style="height:91px"></i></div>
                                </div>
                            </div>
                        </div>
                    </div>
                    <div class="viz-scroll"><div class="viz-thumb"></div></div>
                </div>
                <div class="viz-foot">
                    <div class="vf-year"><span>First Class</span><span>Same Day</span><span>Second C..</span><span>Standar..</span></div>
                    <div class="vf-year"><span>First Class</span><span>Same Day</span><span>Second C..</span><span>Standar..</span></div>
                    <div class="vf-year"><span>First Class</span><span>Same Day</span><span>Second C..</span><span>Standar..</span></div>
                    <div class="vf-year vf-last"><span>First Class</span><span>Same Day</span><span>Second C..</span><span>Standar..</span></div>
                </div>
            </div>
        </div>
    </section>
</main>

<!-- sheet tabs -->
<div class="sheet-tabs">
    <span class="st st-ds"><svg viewBox="0 0 12 16"><path d="M1.500 3.500v9.500c0 2.500 9 2.500 9 0V3.500" fill="none" stroke="#777"/><ellipse cx="6" cy="3.500" rx="4.500" ry="2" fill="none" stroke="#777"/></svg>Data Source</span>
    <span class="st">Sheet 1</span>
    <span class="st">Sheet 2</span>
    <span class="st">Sheet 3</span>
    <span class="st">Sheet 4</span>
    <span class="st st-on">Sheet 5</span>
    <span class="st st-new"><svg viewBox="0 0 22 22"><path d="M9 16H2V2h14v8" fill="none" stroke="#777" stroke-width="1.100"/><path d="M6 12V9M9 12V5M12 12V8" stroke="#777" stroke-width="1.200"/><path d="M16 12v9M11.500 16.500h9" stroke="#777" stroke-width="2"/></svg></span>
    <span class="st st-new"><svg viewBox="0 0 22 22"><path d="M9 16H2V2h14v8M2 9h14M9 2v14" fill="none" stroke="#777" stroke-width="1.100"/><path d="M16 12v9M11.500 16.500h9" stroke="#777" stroke-width="2"/></svg></span>
    <span class="st st-new"><svg viewBox="0 0 22 22"><path d="M10 17l-3-2-5 2V3l5 2 5-3 5 3v6M7 5v10M12 2v9" fill="none" stroke="#777" stroke-width="1.100"/><path d="M16 12v9M11.500 16.500h9" stroke="#777" stroke-width="2"/></svg></span>
</div>

<div class="status-bar">
    <span>128 marks</span><span>8 rows by 16 columns</span><span>SUM(Quantity): 37,873</span>
</div>

<!-- windows taskbar -->
<footer class="taskbar">
    <svg class="win-logo" viewBox="0 0 20 20"><path d="M0 3l8-1.200V9.500H0zM9 1.600L20 0v9.500H9zM0 10.500h8v7.700L0 17zM9 10.500h11V20L9 18.400z" fill="#fff"/></svg>
    <div class="win-search">
        <svg viewBox="0 0 20 20"><circle cx="12" cy="8" r="6" fill="none" stroke="#ddd" stroke-width="1.400"/><path d="M7.500 12.500L1.500 19" stroke="#ddd" stroke-width="1.400"/></svg>
        <span>Type here to search</span>
    </div>
    <span class="tb-app tb-cortana"><svg viewBox="0 0 20 20"><circle cx="10" cy="10" r="8" fill="none" stroke="#fff" stroke-width="2.600"/></svg></span>
    <span class="tb-app tb-taskview"><svg viewBox="0 0 22 22"><path d="M3 2h12M4 6h10v10H4zM3 20h12M18 2v5M18 10h3M18 14v6" fill="none" stroke="#fff" stroke-width="1.500"/></svg></span>
    <span class="tb-app tb-running tb-focus"><svg viewBox="0 0 32 32"><circle cx="16" cy="16" r="12" fill="none" stroke="#34a853" stroke-width="7.600" pathLength="3" stroke-dasharray="1 2" transform="rotate(90 16 16)"/><circle cx="16" cy="16" r="12" fill="none" stroke="#fbbc05" stroke-width="7.600" pathLength="3" stroke-dasharray="1 2" transform="rotate(-30 16 16)"/><circle cx="16" cy="16" r="12" fill="none" stroke="#ea4335" stroke-width="7.600" pathLength="3" stroke-dasharray="1 2" transform="rotate(-150 16 16)"/><circle cx="16" cy="16" r="7" fill="#fff"/><circle cx="16" cy="16" r="5.500" fill="#4285f4"/></svg></span>
    <span class="tb-app tb-running"><svg viewBox="0 0 32 32"><path d="M23 2l7 3.500v21L23 30 10 18.500 4 23l-2-1.500V10.500L4 9l6 4.500z" fill="#0a84d6"/><path d="M23 9l-8 7 8 7z" fill="#101010"/></svg></span>
    <span class="tb-app"><svg viewBox="0 0 32 32"><path d="M3 5h11l3 3h12v21H3z" fill="#f4c95d"/><path d="M3 5h11l3 3h-14z" fill="#e0a12e"/><path d="M11 29V18h10v11h-3v-7h-4v7z" fill="#3a8ad4"/></svg></span>
    <span class="tb-app tb-running"><svg viewBox="0 0 32 32"><rect x="3" width="26" height="32" fill="#000"/><path d="M11 3h3.500l3.500 16V3h3v26l-3.500-.500L14.500 13v16L11 29.500z" fill="#d81f26"/></svg></span>
    <span class="tb-app"><svg viewBox="0 0 32 32"><rect x="4" y="2" width="25" height="28" fill="#ffd000"/><path d="M18 30V18h11z" fill="#333"/></svg></span>
    <span class="tb-app tb-running"><svg viewBox="0 0 32 32"><circle cx="16" cy="16" r="14.500" fill="#f76935" stroke="#f5a081"/><path d="M9 24L22 8M9 24l4-1 10-14" stroke="#fff" stroke-width="1.600" fill="none"/></svg></span>
    <span class="tb-app"><svg viewBox="0 0 32 32"><rect x="2" y="3" width="28" height="26" fill="#0b1c3d"/><rect x="2" y="3" width="28" height="5" fill="#2e7fd6"/><text x="16" y="20" class="tb-mysql">MySQL</text></svg></span>
    <span class="tb-app"><svg viewBox="0 0 32 32"><circle cx="16" cy="16" r="14" fill="#1b1b1b" stroke="#ccc" stroke-width="1.600"/><g fill="none" stroke="#ccc" stroke-width="2.200"><path d="M12 6c4 0 6 4 4 8-1 3-5 3-7 1"/><path d="M25 14c-1 4-5 5-8 3-3-2-2-5 0-7"/><path d="M12 26c-3-3-2-7 1-9 3-1 6 0 7 3"/></g></svg></span>
    <span class="tb-app"><svg viewBox="0 0 32 32"><rect x="2" y="3" width="28" height="26" fill="#000" stroke="#666"/><rect x="2" y="3" width="28" height="4" fill="#888"/><path d="M6 11h4M6 14h2" stroke="#ccc" stroke-width="1.200"/></svg></span>
    <span class="tb-app"><svg viewBox="0 0 32 32"><circle cx="18" cy="16" r="13" fill="#d24726"/><path d="M18 3a13 13 0 0 1 13 13H18z" fill="#ff8f6b"/><rect x="3" y="8" width="17" height="16" rx="1" fill="#b7472a"/><text x="11.500" y="21" class="tb-p">P</text></svg></span>
    <span class="tb-app"><svg viewBox="0 0 32 32"><rect x="3" y="1" width="27" height="30" rx="3" fill="#1cb36b"/><path d="M6 24c0-10 6-16 14-15 5 1 7 5 7 10-3-1-4-3-7-3-1 3-2 3-4 3 0 3-3 5-3 5-2-2-3-1-7 0z" fill="#fff"/></svg></span>
    <span class="tb-app"><svg viewBox="0 0 32 32"><circle cx="16" cy="16" r="12" fill="none" stroke="#4ba82e" stroke-width="4"/><path d="M7 8a12 12 0 0 0 0 16" fill="none" stroke="#101010" stroke-width="4" stroke-dasharray="1.500 1.500"/></svg></span>
    <span class="tb-app"><svg viewBox="0 0 32 32"><path d="M16 1l11 7v13l-11 10L5 21V8z" fill="#15467a"/><path d="M16 3l9 5.500-9 5.500-9-5.500z" fill="#2f6eb3"/><path d="M16 14l-9-5.500V20l9 8z" fill="#a4b7cf"/></svg></span>
    <span class="tb-app tb-running"><svg viewBox="0 0 32 32"><path d="M16 2a14 14 0 0 0-12 21L2 30l7.500-2A14 14 0 1 0 16 2z" fill="#fff"/><path d="M16 4.500a11.500 11.500 0 0 0-10 17.200L5 27l5-1.400A11.500 11.500 0 1 0 16 4.500z" fill="#4fc65b"/><path d="M11 9c-2 2-1 6 2.500 9.500s7 4.500 9 2.500l-.5-3-3.500-1-1.500 1.500c-2-1-3.500-2.500-4.500-4.500l1.500-1.500-1-3.500z" fill="#fff"/></svg></span>
    <div class="tray">
        <svg class="tray-chev" viewBox="0 0 16 10"><path d="M1 9l7-7 7 7" fill="none" stroke="#fff" stroke-width="1.300"/></svg>
        <svg viewBox="0 0 20 20"><rect x="3" y="5" width="15" height="13" fill="none" stroke="#fff" stroke-width="1.300"/><rect x="10" y="7" width="6" height="9" fill="#fff"/><path d="M1 2l5 4" stroke="#fff"/></svg>
        <svg viewBox="0 0 20 20"><g fill="none" stroke="#ccc" stroke-width="1.300"><path d="M17 3C9 4 4 10 3 18"/><path d="M17 8c-5 1-8 5-9 10"/><path d="M17 13c-3 .5-4 3-5 5"/></g></svg>
        <svg viewBox="0 0 20 20"><circle cx="8" cy="8" r="6" fill="#bbb"/><circle cx="13" cy="14" r="5.500" fill="#1d7ad0"/><path d="M13 10.500v7M10 14h6" stroke="#fff"/></svg>
        <svg viewBox="0 0 20 20"><path d="M2 7h3l5-5v16l-5-5H2z" fill="none" stroke="#fff" stroke-width="1.100"/><path d="M13 7c1.500 2 1.500 4 0 6M16 5c2.500 3 2.500 7 0 10" fill="none" stroke="#aaa"/></svg>
        <span class="tray-lang">ENG</span>
        <div class="tray-clock"><span>08:47</span><span>30-05-2021</span></div>
        <svg class="tray-notif" viewBox="0 0 22 22"><path d="M2 2h18v15h-6l-3 4v-4H2z" fill="#fff"/><path d="M5 6h12M5 9.500h12M5 13h9" stroke="#111" stroke-width="1.200"/></svg>
    </div>
</footer>

</body>
</html>
```

FILE: styles.css
```css
* {
    box-sizing: border-box;
}

html, body {
    margin: 0;
    width: 1920px;
    height: 1080px;
    overflow: hidden;
    background-color: #f2f2f2;
}

body {
    font-family: "Lato", "Open Sans", sans-serif;
    color: #555;
}

i {
    font-style: normal;
}

svg text {
    font-family: "Liberation Serif", serif;
    text-anchor: middle;
}

.defs {
    position: absolute;
}

/* browser chrome */
.browser {
    font-family: "Open Sans", sans-serif;
    font-size: 14.300px;
    color: #e8eaed;
}

.tabstrip {
    display: flex;
    align-items: flex-end;
    height: 42px;
    padding-left: 8px;
    background-color: #202124;
}

.tab {
    display: flex;
    align-items: center;
    width: 302px;
    height: 42px;
    padding: 0 16px 0 18px;
    background-color: #35363a;
    border-radius: 8px 8px 0 0;
}

.favicon {
    width: 18px;
    height: 18px;
}

.tab-title {
    margin-left: 11px;
    flex: 1;
}

.tab-x {
    width: 10px;
    height: 10px;
}

.tab-new {
    width: 15px;
    height: 15px;
    margin: 0 0 13px 20px;
}

.win-controls {
    display: flex;
    align-items: center;
    height: 42px;
    margin-left: auto;
}

.win-profile {
    width: 18px;
    height: 18px;
    margin-right: 40px;
}

.win-btn {
    width: 14px;
    height: 14px;
    margin-right: 43px;
}

.win-btn:last-child {
    margin-right: 22px;
}

.navbar {
    display: flex;
    align-items: center;
    height: 42px;
    padding: 2px 0 0 17px;
    background-color: #35363a;
}

.nav-ico {
    width: 20px;
    height: 20px;
    margin-right: 20px;
}

.omnibox {
    display: flex;
    align-items: center;
    width: 1049px;
    height: 35px;
    margin-left: -1px;
    padding: 0 12px 0 15px;
    background-color: #202124;
    border-radius: 18px;
    color: #9aa0a6;
    font-size: 17.400px;
}

.lock {
    width: 12px;
    height: 16px;
    margin-right: 15px;
}

.url {
    flex: 1;
    white-space: nowrap;
    letter-spacing: -0.340px;
}

.url b {
    font-weight: 400;
    color: #e8eaed;
}

.star {
    width: 20px;
    height: 20px;
}

.extensions {
    display: flex;
    align-items: center;
    padding-left: 17px;
}

.extensions > svg,
.ext-stack {
    flex: none;
    width: 20px;
    height: 20px;
    margin-right: 20px;
}

.extensions > .ext-over {
    width: 26px;
    height: 26px;
    margin: 6px 14px 0 0;
}

.extensions > .ext-dots {
    width: 6px;
    margin: 0 0 0 3px;
}

.ext-t {
    font-size: 15px;
    font-weight: 700;
    fill: #444;
}

.ext-stack {
    position: relative;
}

.ext-stack svg {
    width: 20px;
    height: 20px;
}

.ext-badge {
    position: absolute;
    top: 12px;
    left: 7px;
    width: 20px;
    height: 15px;
    background-color: #5e35b1;
    border-radius: 2px;
    color: #fff;
    font: 700 11px/15px "Liberation Sans", sans-serif;
    text-align: center;
}

.avatar {
    width: 28px;
    height: 28px;
    margin: 0 16px 0 -2px;
    background-color: #0288d1;
    border-radius: 50%;
    color: #fff;
    font-size: 15px;
    line-height: 28px;
    text-align: center;
}

.bookmarks {
    display: flex;
    align-items: center;
    height: 43px;
    padding: 0 0 2px 19px;
    background-color: #35363a;
    white-space: nowrap;
}

.bm {
    display: flex;
    align-items: center;
    margin-right: 21.300px;
}

.bm-ico {
    width: 18px;
    height: 18px;
    margin-right: 11px;
}

.bm-r {
    font: 700 17px "Liberation Sans", sans-serif;
    fill: #fff;
}

.bm-more {
    margin-left: auto;
    padding-right: 13px;
    border-right: 1px solid #5f6368;
    font-size: 15px;
    line-height: 24px;
}

.bm-reading {
    margin: 0 18px 0 12px;
}

.bm-reading .bm-ico {
    width: 20px;
    height: 24px;
}

/* tableau header */
.app-head {
    height: 77px;
    padding: 9px 0 0 22px;
    background-color: #232639;
}

.app-title-row {
    display: flex;
    align-items: center;
    height: 26px;
    color: #fff;
    font-size: 16.500px;
    font-weight: 700;
}

.app-x {
    width: 14px;
    height: 14px;
    margin: 5px 20px 0 auto;
}

.menu-row {
    display: flex;
    align-items: center;
    height: 36px;
    margin-top: 2px;
    color: #cfd0d6;
    font-size: 16.800px;
}

.menu {
    display: flex;
    gap: 30px;
}

.user {
    margin-left: auto;
    padding-right: 14px;
}

.caret {
    display: inline-block;
    width: 0;
    height: 0;
    border: 3.500px solid transparent;
    border-top: 4px solid #777;
    border-bottom: 0;
}

.caret-light {
    margin-left: 9px;
    vertical-align: 2px;
    border-top-color: #cfd0d6;
}

.caret-sm {
    flex: none;
}

.caret-lg {
    border-width: 5px 5px 0;
    flex: none;
}

/* toolbar */
.toolbar {
    display: flex;
    align-items: center;
    height: 50px;
    background-color: #f5f5f5;
}

.tb-group {
    display: flex;
    align-items: center;
    height: 46px;
    border-right: 1px solid #d4d4d4;
}

.tb-g1 { width: 130px; padding-left: 0; }
.tb-g2 { width: 97px; padding-left: 8px; }
.tb-g3 { width: 161px; padding-left: 10px; }
.tb-g4 { width: 181px; padding-left: 9px; }
.tb-g5 { width: 195px; padding-left: 10px; }
.tb-g6 { width: 71px; }
.tb-g7 { width: 60px; padding-left: 7px; border-right: 0; }

svg.tb-btn {
    width: 40px;
    height: 24px;
    flex: none;
}

span.tb-btn {
    display: flex;
    align-items: center;
    justify-content: center;
    gap: 3px;
    width: 40px;
    height: 38px;
    flex: none;
}

span.tb-btn svg {
    width: 24px;
    height: 24px;
    flex: none;
}

span.tb-wide {
    width: 46px;
}

span.tb-sum {
    padding-left: 4px;
}

span.tb-active {
    width: 41px;
    margin-right: 1px;
    background-color: #e6e6e6;
}

span.tb-fit {
    width: 50px;
}

span.tb-fit svg {
    width: 26px;
}

span.tb-show {
    width: 71px;
    padding-left: 4px;
    gap: 7px;
}

span.tb-show svg {
    width: 26px;
}

.tb-t {
    font-size: 14px;
    font-weight: 700;
    fill: #777;
}

.show-me {
    display: flex;
    align-items: center;
    margin-left: auto;
    padding-right: 30px;
    color: #444;
    font-size: 15.500px;
}

.show-me-ico {
    width: 18px;
    height: 24px;
    margin-right: 12px;
}

/* workspace */
.workspace {
    display: flex;
    height: 719px;
}

.data-pane {
    display: flex;
    flex-direction: column;
    flex: none;
    width: 250px;
    background-color: #fff;
    border-right: 1px solid #ccc;
    font-size: 16px;
}

.pane-tabs {
    display: flex;
    flex: none;
    height: 34px;
    font-size: 17.500px;
    line-height: 34px;
}

.pane-tab {
    position: relative;
    flex: 1;
    padding-left: 16px;
    background-color: #f5f5f5;
    border-bottom: 1px solid #ccc;
    border-left: 1px solid #ccc;
}

.pane-tab-on {
    flex: none;
    width: 99px;
    background-color: #fff;
    border: 0;
    color: #444;
}

.pane-collapse {
    position: absolute;
    top: 11px;
    right: 9px;
    width: 8px;
    height: 12px;
}

.ds-row {
    display: flex;
    align-items: center;
    flex: none;
    height: 41px;
    padding: 0 0 2px 11px;
    border-bottom: 1px solid #ccc;
}

.ds-ico {
    width: 20px;
    height: 20px;
    margin-right: 7px;
}

.search-row {
    display: flex;
    align-items: center;
    flex: none;
    height: 52px;
    padding: 16px 0 6px 8px;
}

.search-box {
    display: flex;
    align-items: center;
    width: 162px;
    height: 30px;
    padding-left: 8px;
    border: 1px solid #ccc;
    color: #777;
}

.search-ico {
    width: 16px;
    height: 16px;
    margin-right: 10px;
}

.search-filter {
    width: 16px;
    height: 16px;
    margin: 0 3px 0 7px;
}

.search-sep {
    height: 26px;
    margin: 0 12px 0 8px;
    border-left: 1px solid #ddd;
}

.field-list {
    flex: 1;
    overflow: hidden;
}

.field {
    display: flex;
    align-items: center;
    height: 26.200px;
    padding-left: 21px;
}

.field b {
    flex: none;
    width: 12px;
    height: 12px;
}

.f-more {
    background-color: transparent;
    position: relative;
}

.f-more::after {
    content: "";
    position: absolute;
    top: 3px;
    left: 1px;
    width: 6px;
    height: 6px;
    border-top: 2px solid #777;
    border-right: 2px solid #777;
    transform: rotate(45deg);
}

.f-ico {
    display: flex;
    align-items: center;
    justify-content: center;
    flex: none;
    width: 28px;
    margin-right: 14px;
}

.f-ico svg {
    width: 15px;
    height: 15px;
}

.f-abc {
    color: #4a8eab;
    font-size: 11.500px;
    font-weight: 700;
}

.f-bin-blue {
    color: #4a8eab;
}

.f-bin-green {
    color: #4e9f80;
}

.f-bin-blue svg,
.f-bin-green svg {
    width: 18px;
}

.f-set svg {
    width: 18px;
    height: 18px;
}

.field-sep {
    height: 1px;
    margin: 2px 30px 2px 34px;
    background-color: #ccc;
}

.field-calc {
    margin-top: 1px;
}

.table-row {
    display: flex;
    align-items: center;
    height: 26px;
    margin-top: 10px;
    padding-left: 11px;
    color: #444;
}

.table-chev {
    width: 11px;
    height: 8px;
    margin-right: 9px;
}

.table-ico {
    width: 13px;
    height: 12px;
    margin-right: 21px;
}

.field-sub {
    padding-left: 33px;
}

.params {
    flex: none;
    height: 119px;
    border-top: 1px solid #ccc;
}

.params-title {
    padding: 6px 0 6px 23px;
    color: #444;
    font-size: 16.500px;
    line-height: 20px;
}

.param {
    display: flex;
    align-items: center;
    height: 26.200px;
    padding-left: 30px;
}

.param svg {
    width: 13px;
    height: 13px;
    margin-right: 21px;
}

/* pages, filters, marks */
.cards-col {
    display: flex;
    flex-direction: column;
    gap: 8px;
    flex: none;
    width: 222px;
    margin: 0 8px;
    padding-top: 0;
    font-size: 16px;
}

.card {
    background-color: #fafafa;
    border: 1px solid #ccc;
}

.card-pages {
    height: 58px;
}

.card-filters {
    height: 57px;
}

.card-head {
    display: flex;
    align-items: center;
    height: 31px;
    padding-left: 10px;
}

.chev-up {
    width: 9px;
    height: 9px;
    margin: 5px 8px 0 2px;
    border-top: 2px solid #777;
    border-left: 2px solid #777;
    transform: rotate(45deg);
}

.marks-head {
    height: 33px;
    padding-bottom: 2px;
    border-bottom: 1px solid #ccc;
}

.marks-row {
    display: flex;
    align-items: center;
    padding-left: 11px;
    border-bottom: 1px solid #ccc;
}

.marks-row svg {
    width: 18px;
    height: 16px;
    margin-right: 10px;
}

.marks-all {
    height: 42px;
}

.marks-sum {
    height: 41px;
}

.marks-sum:last-child {
    border-bottom: 0;
}

.marks-body {
    height: 211px;
    padding: 8px 7px;
    border-bottom: 1px solid #ccc;
}

.mark-select {
    display: flex;
    align-items: center;
    width: 205px;
    height: 29px;
    padding-left: 9px;
    border: 1px solid #bbb;
}

.mark-select svg {
    width: 18px;
    height: 16px;
    margin-right: 4px;
}

.mark-select-btn {
    display: flex;
    align-items: center;
    justify-content: center;
    width: 22px;
    height: 27px;
    margin-left: auto;
    border-left: 1px solid #ddd;
}

.mark-grid {
    display: flex;
    flex-wrap: wrap;
    gap: 9px 3px;
    margin-top: 9px;
}

.mark-btn {
    display: flex;
    flex-direction: column;
    align-items: center;
    gap: 4px;
    width: 63px;
    height: 61px;
    padding-top: 11px;
    border: 1px solid #ddd;
    font-size: 15px;
    line-height: 18px;
}

.mark-btn svg {
    width: 18px;
    height: 18px;
    flex: none;
}

/* shelves */
.view-col {
    flex: none;
    width: 1424px;
}

.shelf {
    display: flex;
    align-items: center;
    height: 35px;
    margin-bottom: 8px;
    background-color: #fafafa;
    border: 1px solid #ddd;
    font-size: 16px;
}

.shelf-label {
    display: flex;
    align-items: center;
    flex: none;
    width: 106px;
    height: 33px;
    padding: 0 0 3px 7px;
    border-right: 1px solid #ddd;
    color: #444;
}

.shelf-label svg {
    width: 15px;
    height: 14px;
    margin-right: 6px;
}

.pills {
    display: flex;
    gap: 4px;
    padding-left: 8px;
}

.pill {
    display: flex;
    align-items: center;
    width: 187px;
    height: 25px;
    padding: 0 0 2px 10px;
    border-radius: 13px;
    color: #fff;
    font-size: 15.800px;
}

.pill-plain {
    padding-left: 13px;
}

.pill-blue {
    background-color: #4e96b5;
}

.pill-green {
    background-color: #02b180;
}

.pill-plus {
    position: relative;
    width: 12px;
    height: 12px;
    margin-right: 4px;
    border: 1px solid #fff;
}

.pill-plus::before {
    content: "";
    position: absolute;
    top: 4px;
    left: 1px;
    width: 8px;
    height: 2px;
    background-color: #fff;
}

.pill-plus::after {
    content: "";
    position: absolute;
    top: 1px;
    left: 4px;
    width: 2px;
    height: 8px;
    background-color: #fff;
}

/* sheet */
.sheet {
    height: 624px;
    padding-left: 4px;
    background-color: #fff;
    border: 1px solid #ddd;
}

.sheet-title {
    height: 58px;
    margin: 0;
    padding: 11px 0 0 4px;
    color: #666;
    font-size: 27px;
    font-weight: 300;
    line-height: 36px;
}

.viz {
    font-size: 15.600px;
}

.viz-head {
    width: 1386px;
}

.vh-top {
    height: 25px;
    margin-left: 185px;
    border-left: 1px solid #ccc;
    color: #444;
    line-height: 22px;
    text-align: center;
}

.vh-years {
    display: flex;
    height: 25px;
    border-bottom: 1px solid #ccc;
    line-height: 22px;
}

.vh-region {
    width: 185px;
    padding: 1px 0 0 7px;
    color: #444;
}

.vh-year {
    width: 300px;
    border-left: 1px solid #ccc;
    color: #777;
    text-align: center;
}

.vh-last {
    width: 301px;
    border-right: 1px solid #ccc;
}

.viz-body {
    display: flex;
    height: 483px;
}

.viz-rows {
    flex: none;
    width: 1386px;
}

.region {
    display: flex;
    border-bottom: 1px solid #ccc;
}

.region-name {
    flex: none;
    width: 100px;
    padding: 50px 0 0 7px;
    color: #777;
    line-height: 20px;
}

.measures {
    flex: 1;
}

.measure {
    position: relative;
    display: flex;
    height: 125px;
    overflow: hidden;
    border-bottom: 1px solid #ccc;
}

.measure-last {
    height: 124px;
    border-bottom: 0;
}

.measure-cut {
    height: 107px;
}

.axis {
    position: relative;
    flex: none;
    width: 85px;
    height: 125px;
}

.axis-title {
    position: absolute;
    top: 0;
    left: 10px;
    width: 18px;
    height: 125px;
    color: #555;
    font-size: 14px;
    letter-spacing: 1.300px;
    line-height: 18px;
    text-align: center;
    writing-mode: vertical-rl;
    transform: rotate(180deg);
}

.tick {
    position: absolute;
    right: 8px;
    color: #777;
    line-height: 20px;
}

.gl {
    position: absolute;
    left: 80px;
    right: 0;
    height: 2px;
    background-color: #f5f5f5;
}

.pane {
    position: relative;
    display: flex;
    align-items: flex-end;
    gap: 19px;
    flex: none;
    width: 300px;
    padding-left: 9px;
    border-left: 1px solid #ccc;
    box-shadow: inset 0 -1px 0 #e2e2e2;
}

.pane:last-child {
    width: 301px;
    border-right: 1px solid #ccc;
}

.bar {
    flex: none;
    width: 56px;
    background-color: #f48f2e;
    border-top: 1px solid #f9c89b;
}

.bar-none {
    visibility: hidden;
}

.viz-scroll {
    flex: none;
    width: 21px;
    background-color: #f5f5f5;
}

.viz-thumb {
    height: 232px;
    background-color: #ddd;
}

.viz-foot {
    display: flex;
    height: 27px;
    margin-left: 185px;
}

.vf-year {
    display: flex;
    width: 300px;
    border-left: 1px solid #ccc;
    font-size: 15.800px;
}

.vf-last {
    width: 301px;
    border-right: 1px solid #ccc;
}

.vf-year span {
    flex: 1;
    color: #777;
    line-height: 32px;
    height: 27px;
    text-align: center;
    white-space: nowrap;
}

.vf-year span + span {
    background: linear-gradient(#e6e6e6, #e6e6e6) left top / 1px 8px no-repeat;
}

/* sheet tabs + status */
.sheet-tabs {
    display: flex;
    height: 37px;
    background-color: #e6e6e6;
    border-top: 1px solid #ccc;
    border-bottom: 1px solid #ccc;
    font-size: 16px;
    line-height: 35px;
}

.st {
    display: flex;
    align-items: center;
    justify-content: center;
    width: 72px;
    padding-bottom: 4px;
    border-right: 1px solid #d0d0d0;
    color: #666;
}

.st-ds {
    width: 157px;
    gap: 6px;
    justify-content: flex-start;
    padding-left: 13px;
}

.st-ds svg {
    width: 12px;
    height: 16px;
}

.st-on {
    background-color: #fff;
    color: #333;
    font-weight: 700;
}

.st-new {
    width: 40px;
}

.st-new svg {
    width: 22px;
    height: 22px;
}

.status-bar {
    display: flex;
    gap: 15px;
    height: 20px;
    padding: 1px 0 0 12px;
    background-color: #f0f0f0;
    color: #444;
    font-size: 13.100px;
    line-height: 19px;
}

/* windows taskbar */
.taskbar {
    display: flex;
    align-items: center;
    height: 50px;
    background-color: #101010;
    color: #fff;
    font-family: "Open Sans", sans-serif;
}

.win-logo {
    width: 20px;
    height: 20px;
    margin: 0 20px;
    flex: none;
}

.win-search {
    display: flex;
    align-items: center;
    flex: none;
    width: 430px;
    height: 50px;
    padding-left: 16px;
    background-color: #3f3f3f;
    border: 1px solid #666;
    border-bottom: 0;
    color: #ddd;
    font-size: 17.800px;
}

.win-search svg {
    width: 20px;
    height: 20px;
    margin-right: 13px;
}

.tb-app {
    display: flex;
    align-items: center;
    justify-content: center;
    flex: none;
    width: 62px;
    height: 50px;
    border-bottom: 3px solid transparent;
}

.tb-app svg {
    width: 32px;
    height: 32px;
}

.tb-cortana,
.tb-taskview {
    width: 60px;
}

.tb-cortana svg,
.tb-taskview svg {
    width: 20px;
    height: 20px;
}

.tb-taskview {
    width: 63px;
    padding-right: 5px;
}

.tb-running {
    border-bottom-color: #76e4f7;
}

.tb-focus {
    background-color: #333;
}

.tb-mysql {
    font: 700 7px "Liberation Sans", sans-serif;
    fill: #ddd;
}

.tb-p {
    font: 700 13px "Liberation Sans", sans-serif;
    fill: #fff;
}

.tray {
    display: flex;
    align-items: center;
    flex: 1;
    padding-left: 94px;
}

.tray svg {
    width: 20px;
    height: 20px;
    flex: none;
    margin-right: 9px;
}

.tray .tray-chev {
    width: 16px;
    height: 10px;
    margin-right: 12px;
}

.tray-lang {
    margin-left: 10px;
    font-size: 13px;
}

.tray-clock {
    display: flex;
    flex-direction: column;
    align-items: center;
    margin-left: 9px;
    width: 84px;
    font-size: 13.500px;
    line-height: 22px;
}

.tray .tray-notif {
    width: 22px;
    height: 22px;
    margin: 0 0 0 20px;
}
```
